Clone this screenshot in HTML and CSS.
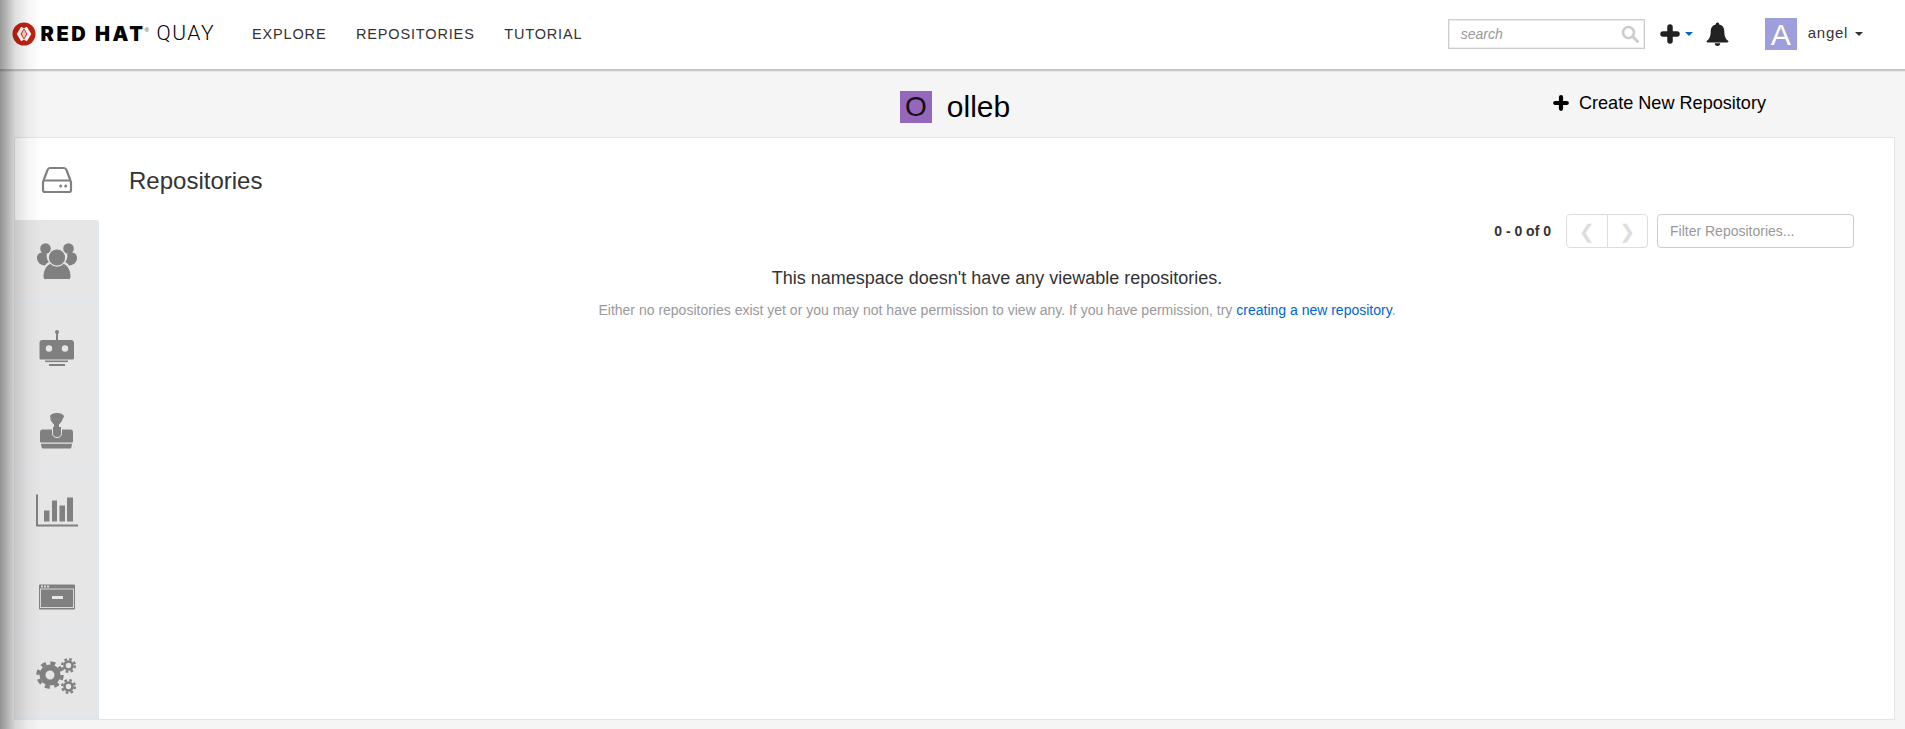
FILE: index.html
```html
<!DOCTYPE html>
<html lang="en">
<head>
<meta charset="utf-8">
<title>Red Hat Quay</title>
<link rel="stylesheet" href="styles.css">
</head>
<body>
<div class="edge-shade"></div>
<header class="navbar">
  <a class="brand">
    <svg class="brand-mark" width="24" height="24" viewBox="0 0 24 24"><circle cx="12" cy="12" r="11.500" fill="#c4210f"/><path d="M10.600 5.500 6.700 12l3.900 6.500M13.400 5.500l3.900 6.500-3.900 6.500" fill="none" stroke="#fff" stroke-width="3.400"/><path d="M12 7.500 9.600 12l2.400 4.500L14.400 12Z" fill="#f4cfc9"/></svg>
    <span class="brand-red">RED HAT</span><sup class="brand-reg">®</sup>
    <span class="brand-quay">QUAY</span>
  </a>
  <nav class="nav-links">
    <a>EXPLORE</a>
    <a>REPOSITORIES</a>
    <a>TUTORIAL</a>
  </nav>
  <div class="nav-right">
    <div class="search">
      <span class="search-text">search</span>
      <svg width="18" height="18" viewBox="0 0 18 18" class="search-icon"><circle cx="7.500" cy="7.500" r="5.500" fill="none" stroke="#ccc" stroke-width="2.600"/><path d="M11.500 11.500 16.500 16.500" stroke="#ccc" stroke-width="3" stroke-linecap="round"/></svg>
    </div>
    <div class="plus-menu">
      <svg width="20" height="20" viewBox="0 0 20 20"><path d="M10 3V17M3 10H17" stroke="#222" stroke-width="5.500" stroke-linecap="round"/></svg>
      <span class="caret caret-blue"></span>
    </div>
    <svg class="bell" width="23" height="24" viewBox="0 0 23 24"><path d="M11.500 0.500a1.700 1.700 0 0 1 1.700 1.900C16.500 3 18.300 5.500 18.300 9c0 5.500 1.200 7.800 4.200 10.300 0 .7-.5 1.200-1.200 1.200H1.700c-.7 0-1.200-.5-1.200-1.200C3.500 16.800 4.700 14.500 4.700 9c0-3.500 1.800-6 5.100-6.600a1.700 1.700 0 0 1 1.700-1.900Z" fill="#222"/><path d="M8.800 21.300h5.400a2.700 2.700 0 0 1-5.400 0Z" fill="#222"/></svg>
    <div class="user-avatar">A</div>
    <span class="user-name">angel</span>
    <span class="caret"></span>
  </div>
</header>

<section class="title-row">
  <div></div>
  <h1 class="org-title"><span class="org-avatar">O</span>olleb</h1>
  <div class="title-action">
    <a class="create-link">
      <svg width="16" height="16" viewBox="0 0 16 16"><path d="M8 2.200V13.800M2.200 8H13.800" stroke="#000" stroke-width="4.200" stroke-linecap="round"/></svg>
      Create New Repository
    </a>
  </div>
</section>

<main class="card">
  <aside class="tabs">
    <div class="tab tab-active">
      <svg width="48" height="48" viewBox="0 0 48 48"><g fill="none" stroke="#808080" stroke-width="2.200" stroke-linejoin="round"><path d="M10.500 25.500 14.500 15Q15.200 13 17 13H31Q32.800 13 33.500 15L37.500 25.500"/><rect x="10" y="25.500" width="28" height="11.500" rx="2"/></g><circle cx="27.700" cy="31" r="1.500" fill="#808080"/><circle cx="32.700" cy="31" r="1.500" fill="#808080"/></svg>
    </div>
    <div class="tab">
      <svg width="48" height="48" viewBox="0 0 48 48"><g fill="#808080"><circle cx="12.500" cy="11.500" r="5.300"/><circle cx="35.500" cy="11.500" r="5.300"/><path d="M4 21c0-3 2-5.500 5-5.500l5 1c-1 3 0 6 2 8.500-2 1-3 2-4 3.500-4 0-8-3-8-7.500ZM44 21c0-3-2-5.500-5-5.500l-5 1c1 3 0 6-2 8.500 2 1 3 2 4 3.500 4 0 8-3 8-7.500Z"/></g><path d="M12.500 42.500c-1.500 0-2.500-1-2.500-3 0-6 3-11.500 8-13.500 3.500 2.500 8.500 2.500 12 0 5 2 8 7.500 8 13.500 0 2-1 3-2.500 3Z" fill="#808080" stroke="#e6e6e6" stroke-width="1"/><circle cx="24" cy="20.500" r="8.700" fill="#808080" stroke="#e6e6e6" stroke-width="1.200"/></svg>
    </div>
    <div class="tab">
      <svg width="48" height="48" viewBox="0 0 48 48"><g fill="#808080"><circle cx="24" cy="12" r="2"/><rect x="23" y="12" width="2" height="8"/><path d="M6.500 23q0-3 3-3H38q3 0 3 3v15q0 1.500-1.500 1.500H8Q6.500 39.500 6.500 38Z"/><rect x="12" y="40.500" width="23" height="1.600"/><rect x="16" y="44" width="16" height="2"/></g><circle cx="16" cy="28.500" r="3.200" fill="#e6e6e6"/><circle cx="32" cy="28.500" r="3.200" fill="#e6e6e6"/></svg>
    </div>
    <div class="tab">
      <svg width="48" height="48" viewBox="0 0 48 48"><g fill="#808080"><path d="M7 29q0-2.500 2.500-2.500H38q2 0 2 2.500v9.500q0 1-1 1H8q-1 0-1-1Z"/><path d="M8 40.800H39L38.500 44q-.3 1.500-1.500 1.500H10q-1.200 0-1.500-1.500Z"/><ellipse cx="24" cy="13.500" rx="7" ry="3.500"/><path d="M17 15c.5 3 2.500 5 4 6.500v5h5V21.500c1.500-1.500 3.500-3.500 4-6.500q-6.500 3-13 0Z"/></g><path d="M19.500 24v6.500c0 2.500 2 4 4.500 4s4.500-1.500 4.500-4V24" fill="#808080" stroke="#e6e6e6" stroke-width="1"/></svg>
    </div>
    <div class="tab">
      <svg width="48" height="48" viewBox="0 0 48 48"><g fill="#808080"><path d="M3 8.500H5V38.500H45V40.500H3Z"/><rect x="11" y="24.500" width="5.500" height="11"/><rect x="19" y="14.500" width="5" height="21"/><rect x="26.500" y="19.500" width="5.500" height="16"/><rect x="34" y="11.500" width="6" height="24"/></g></svg>
    </div>
    <div class="tab">
      <svg width="48" height="48" viewBox="0 0 48 48"><rect x="6" y="15.500" width="36" height="25" rx="1" fill="#808080"/><rect x="7.500" y="20" width="33" height="18.500" fill="#808080" stroke="#d8d8d8" stroke-width="1"/><path d="M8 16.500h2v2H8ZM11 16.500h2v2h-2ZM14 16.500h2v2h-2Z" fill="#d8d8d8"/><rect x="19" y="27" width="11" height="3" fill="#e6e6e6"/></svg>
    </div>
    <div class="tab tab-last">
      <svg width="48" height="48" viewBox="0 0 48 48"><g fill="none" stroke="#808080"><circle cx="17" cy="23" r="7.500" stroke-width="6"/><circle cx="17" cy="23" r="12" stroke-width="3.500" stroke-dasharray="5 4.425"/><circle cx="35.500" cy="13.500" r="4" stroke-width="2.600"/><circle cx="35.500" cy="13.500" r="6.300" stroke-width="2.400" stroke-dasharray="2.600 2.350"/><circle cx="35.500" cy="34.500" r="4" stroke-width="2.600"/><circle cx="35.500" cy="34.500" r="6.300" stroke-width="2.400" stroke-dasharray="2.600 2.350"/></g></svg>
    </div>
  </aside>
  <div class="content">
    <h2 class="content-title">Repositories</h2>
    <div class="toolbar">
      <span class="count">0 - 0 of 0</span>
      <div class="pager">
        <button class="pager-btn">❮</button>
        <button class="pager-btn">❯</button>
      </div>
      <div class="filter">Filter Repositories...</div>
    </div>
    <div class="empty">
      <div class="empty-title">This namespace doesn't have any viewable repositories.</div>
      <div class="empty-sub">Either no repositories exist yet or you may not have permission to view any. If you have permission, try <a class="link">creating a new repository</a>.</div>
    </div>
  </div>
</main>
</body>
</html>
```

FILE: styles.css
```css
* { box-sizing: border-box; }
html, body { height: 100%; }
body {
  margin: 0;
  background: #f5f5f5;
  font-family: "Liberation Sans", Arial, sans-serif;
  color: #333;
  overflow: hidden;
  display: flex;
  flex-direction: column;
}
.edge-shade {
  position: absolute;
  left: 0;
  top: 0;
  bottom: 0;
  width: 42px;
  background: linear-gradient(to right, rgba(0,0,0,.4) 0, rgba(0,0,0,.26) 8px, rgba(0,0,0,.13) 15px, rgba(0,0,0,.04) 28px, rgba(0,0,0,0) 42px);
  pointer-events: none;
  z-index: 5;
}
.navbar {
  height: 71px;
  flex: none;
  background: #fff;
  border-bottom: 2px solid #c8c8c8;
  box-shadow: 0 1px 1px rgba(0,0,0,.05);
  display: flex;
  align-items: center;
  padding: 0 42px 2px 12px;
}
.brand { display: flex; align-items: center; width: 240px; color: #000; }
.brand-mark { flex: none; }
.brand-red { font-family: Inter, sans-serif; font-weight: 900; font-size: 20px; letter-spacing: 2.600px; margin-left: 4.500px; line-height: 1; }
.brand-reg { font-size: 6px; color: #333; margin: -8px 0 0 -1px; width: 12px; }
.brand-quay { font-family: Roboto, sans-serif; font-weight: 300; font-size: 21px; letter-spacing: 1.500px; line-height: 1; color: #000; }
.nav-links { display: flex; gap: 29.500px; }
.nav-links a { font-size: 14.500px; letter-spacing: .85px; color: #333; }
.nav-right { margin-left: auto; display: flex; align-items: center; }
.search {
  width: 197px;
  height: 30px;
  border: 1px solid #ccc;
  box-shadow: inset 0 0 0 .5px #ddd;
  display: flex;
  align-items: center;
  justify-content: space-between;
  padding: 0 5px 0 12px;
}
.search-text { font-style: italic; font-size: 14px; color: #999; }
.search-icon { flex: none; }
.plus-menu { display: flex; align-items: center; margin-left: 15px; width: 46px; gap: 5px; }
.caret { width: 0; height: 0; border-left: 4.500px solid transparent; border-right: 4.500px solid transparent; border-top: 4.500px solid #333; }
.caret-blue { border-top-color: #0066cc; }
.bell { flex: none; }
.user-avatar {
  width: 32px;
  height: 32px;
  background: #9e9edc;
  color: #fff;
  margin-left: 36px;
  font-size: 30px;
  line-height: 33px;
  text-align: center;
}
.user-name { font-size: 15px; letter-spacing: .7px; margin-left: 11px; margin-right: 7px; position: relative; top: -1px; }
.title-row {
  flex: none;
  height: 66px;
  display: grid;
  grid-template-columns: 1fr auto 1fr;
  align-items: center;
}
.org-title {
  margin: 5px 0 0 5px;
  font-weight: 400;
  font-size: 30px;
  color: #000;
  display: flex;
  align-items: center;
}
.org-avatar {
  width: 32px;
  height: 32px;
  background: #9467bd;
  color: #111;
  font-size: 28px;
  line-height: 32px;
  text-align: center;
  margin-right: 15px;
}
.title-action { display: flex; justify-content: flex-end; padding-right: 139px; padding-bottom: 2px; }
.create-link { font-size: 18.100px; color: #000; display: flex; align-items: center; gap: 10px; }
.card {
  flex: none;
  height: 583px;
  margin-left: 14px;
  margin-right: 10px;
  background: #fff;
  border: 1px solid #e4e4e4;
  display: flex;
}
.tabs { width: 84px; flex: none; display: flex; flex-direction: column; }
.tab {
  height: 83px;
  flex: none;
  background: #e6e6e6;
  border-bottom: 1px solid #dfe6ec;
  border-right: 1px solid #dfe6ec;
  display: flex;
  align-items: center;
  justify-content: center;
}
.tab-active { height: 82px; background: #fff; border-bottom: 0; border-right: 0; }
.tab-active + .tab { border-top-right-radius: 3px; }
.tab-last { height: 84px; padding-bottom: 1px; }
.content { flex: 1; padding: 26px 40px 0 30px; min-width: 0; }
.content-title { margin: 0; font-weight: 400; font-size: 24px; line-height: 34px; color: #333; }
.toolbar { display: flex; align-items: center; justify-content: flex-end; margin-top: 16px; height: 34px; }
.count { font-size: 14px; font-weight: 700; margin-right: 15px; }
.pager { display: flex; width: 82px; height: 34px; border: 1px solid #ddd; border-radius: 4px; margin-right: 9px; }
.pager-btn { flex: 1; border: 0; background: none; padding: 0; font-family: "DejaVu Sans", sans-serif; font-size: 19px; color: #ddd; }
.pager-btn + .pager-btn { border-left: 1px solid #ddd; }
.filter { width: 197px; height: 34px; border: 1px solid #ccc; border-radius: 4px; font-size: 14px; line-height: 32px; padding-left: 12px; color: #999; }
.empty { text-align: center; margin-top: 18px; padding-left: 11px; }
.empty-title { font-size: 18px; line-height: 24px; }
.empty-sub { font-size: 14px; line-height: 20px; color: #999; margin-top: 10px; }
.link { color: #0066cc; }
```
